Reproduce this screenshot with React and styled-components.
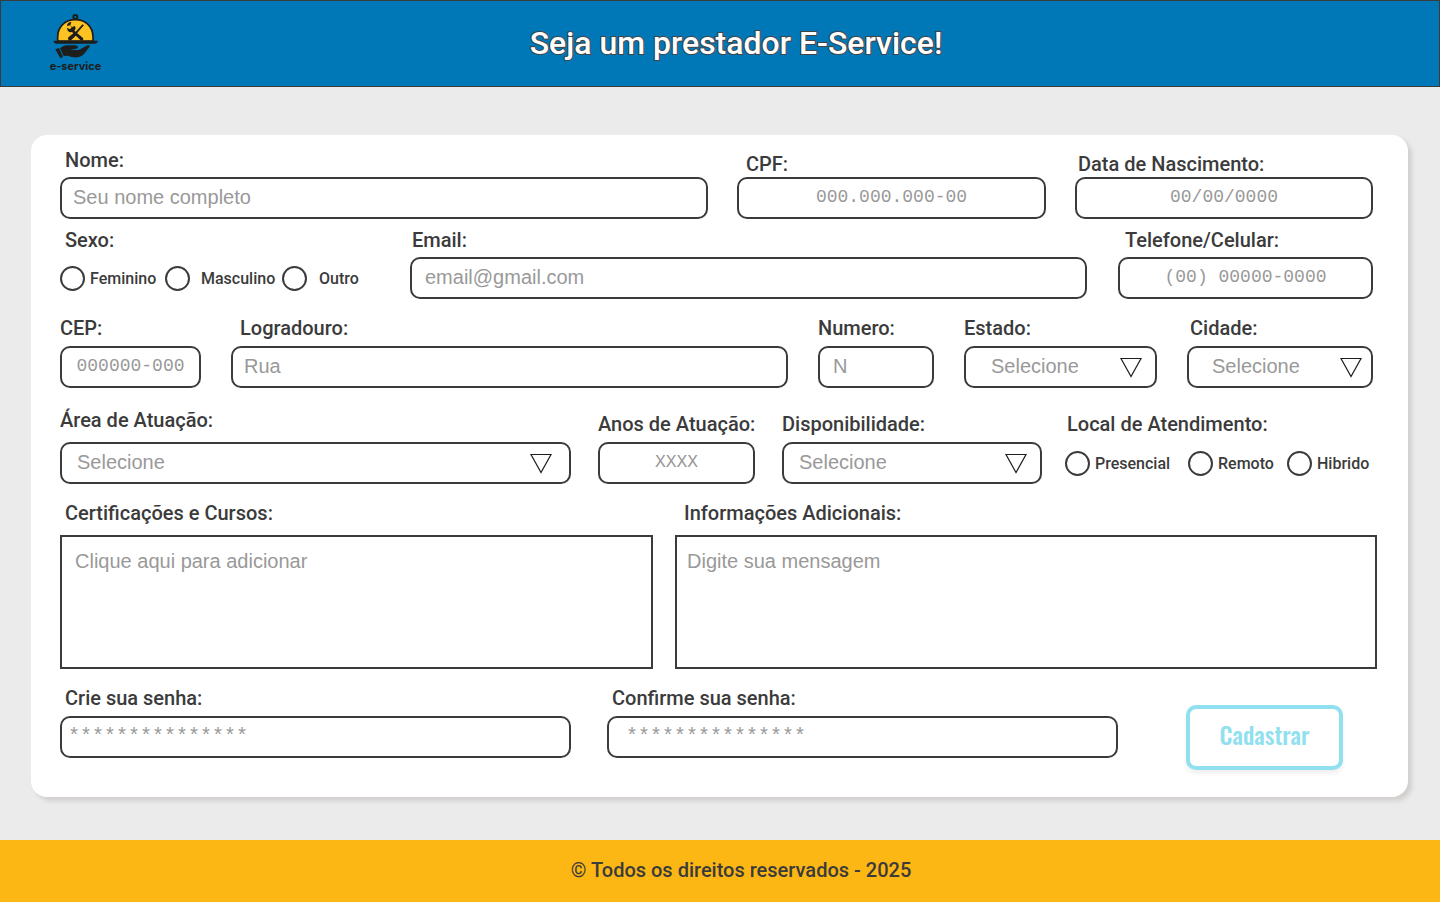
import React from "react";
import styled, { createGlobalStyle } from "styled-components";

const ink = "#3b3b3b";
const hint = "#999999";
const sans = '"Liberation Sans", Arial, sans-serif';
const mono = '"Liberation Mono", "Courier New", monospace';

const GlobalStyle = createGlobalStyle`
  *, *::before, *::after { box-sizing: border-box; }
  body { margin: 0; background: #ebebeb; color: ${ink}; font-family: Roboto, sans-serif; }
`;

const Page = styled.div`
  min-height: 100vh;
  display: flex;
  flex-direction: column;
`;

const Header = styled.header`
  height: 87px;
  display: flex;
  align-items: center;
  padding: 0 70px 0 47px;
  background: #0077b7;
  border: 1px solid ${ink};
`;

const Brand = styled.a`
  display: flex;
  flex-direction: column;
  align-items: center;
  width: 55px;
  color: #1d1d1b;
  font: 700 11px/14px Inter, sans-serif;
  text-decoration: none;
  white-space: nowrap;
`;

const Title = styled.h1`
  flex: 1;
  margin: 0;
  padding-bottom: 2px;
  color: #fff;
  font-size: 32px;
  font-weight: 500;
  line-height: 40px;
  text-align: center;
  -webkit-text-stroke: 2px #444;
  paint-order: stroke fill;
`;

const Main = styled.main`
  flex: 1;
  padding: 48px 32px 43px 31px;
`;

const Card = styled.form`
  padding: 13px 35px 27px 29px;
  background: #fff;
  border-radius: 16px;
  box-shadow: 4px 4px 4px #d3cfcf;
`;

const Row = styled.div`
  display: grid;
  grid-template-columns: ${(p) => p.$cols};
  align-items: ${(p) => p.$align || "end"};
  column-gap: ${(p) => p.$gap}px;
  margin-top: ${(p) => p.$top || 0}px;
  margin-right: ${(p) => (p.$wide ? "-4px" : "0")};
`;

const FieldBox = styled.div`
  display: flex;
  flex-direction: column;
  gap: ${(p) => p.$gap}px;
  min-width: 0;
`;

const Label = styled.label`
  padding-left: ${(p) => p.$indent || 0}px;
  font-size: 20px;
  font-weight: 500;
  line-height: 24px;
  white-space: nowrap;
`;

const Input = styled.input`
  width: 100%;
  height: 42px;
  padding: 0 ${(p) => (p.$center ? 4 : p.$pad || 13)}px 2px;
  border: 2px solid ${ink};
  border-radius: 10px;
  background: #fff;
  color: ${ink};
  font-family: ${(p) => (p.$mono ? mono : sans)};
  font-size: ${(p) => (p.$center ? 18 : 20)}px;
  text-align: ${(p) => (p.$center ? "center" : "left")};
  &::placeholder { color: ${hint}; opacity: 1; }
`;

const SelectWrap = styled.div`
  position: relative;
`;

const SelectBox = styled.select`
  display: block;
  width: 100%;
  height: 42px;
  padding: 0 40px 2px ${(p) => p.$pad}px;
  border: 2px solid ${ink};
  border-radius: 10px;
  background: #fff;
  color: ${hint};
  font: 20px ${sans};
  appearance: none;
`;

const Arrow = styled.svg`
  position: absolute;
  top: 10px;
  right: ${(p) => p.$right}px;
  width: 22px;
  height: 22px;
  pointer-events: none;
`;

const TextArea = styled.textarea`
  display: block;
  width: 100%;
  height: 134px;
  padding: 12px ${(p) => p.$pad}px;
  border: 2px solid ${ink};
  border-radius: 0;
  background: #fff;
  color: ${ink};
  font: 20px/24px ${sans};
  resize: none;
  &::placeholder { color: ${hint}; opacity: 1; }
`;

const Options = styled.div`
  display: grid;
  grid-template-columns: ${(p) => p.$cols};
  align-items: center;
  height: 42px;
`;

const Option = styled.label`
  display: flex;
  align-items: center;
  gap: ${(p) => p.$gap || 5}px;
  font-size: 16px;
  font-weight: 500;
  white-space: nowrap;
`;

const Radio = styled.input`
  flex: none;
  width: 25px;
  height: 25px;
  margin: 0;
  border: 2px solid ${ink};
  border-radius: 50%;
  background: #fff;
  appearance: none;
  &:checked { background: ${ink}; box-shadow: inset 0 0 0 4px #fff; }
`;

const Submit = styled.button`
  height: 65px;
  margin: 19px 30px 0 32px;
  padding: 0 0 8px;
  border: 4px solid #90e0ef;
  border-radius: 10px;
  background: #fff;
  box-shadow: 0 4px 4px #f1f1f1;
  color: #90e0ef;
  font: 500 24px/30px Oswald, "Roboto Condensed", Roboto, sans-serif;
`;

const Footer = styled.footer`
  height: 62px;
  padding-left: 42px;
  background: #fdb714;
  font-size: 20px;
  font-weight: 500;
  line-height: 61px;
  text-align: center;
`;

function Logo() {
  return (
    <svg width="53" height="45" viewBox="27 27 159 135" aria-hidden="true">
      <circle cx="106" cy="36" r="6" fill="none" stroke="#1d1d1b" strokeWidth="6" />
      <path d="M53 108V96C53 64 76 44 106 44s53 20 53 52v12z" fill="#fdc323" stroke="#1d1d1b" strokeWidth="5" />
      <path d="M41 107h132v3q-2 6-9 6H50q-7 0-9-6z" fill="#1d1d1b" />
      <path d="M128 59l2 2-20 23-3-2z" fill="#1d1d1b" stroke="#1d1d1b" strokeWidth="3" />
      <path d="M101 84l8 7-15 14q-5 3-9-1-3-4 1-8z" fill="#1d1d1b" />
      <path d="M94 51l-3 10 5 5 9-3q4 9-2 14l26 22q3 4-1 7-4 2-7-1L96 81q-14 3-15-13l9 5 5-6-5-6-9 2q0-11 13-12z" fill="#1d1d1b" />
      <path d="M46 133l11-4 12 27-8 4z" fill="#1d1d1b" />
      <path d="M60 130q10-9 20-9h24q10 1 10 6-1 5-11 5H91q14 5 27 2l24-13q7-2 8 3l-18 23q-8 9-19 10-17 1-29-5l-13 1z" fill="#1d1d1b" />
    </svg>
  );
}

function Field({ id, label, indent, gap = 5, children }) {
  return (
    <FieldBox $gap={gap}>
      <Label htmlFor={id} $indent={indent}>{label}</Label>
      {children}
    </FieldBox>
  );
}

function Select({ id, pad = 15, arrow = 15 }) {
  return (
    <SelectWrap>
      <SelectBox id={id} $pad={pad} defaultValue="">
        <option value="">Selecione</option>
      </SelectBox>
      <Arrow viewBox="0 0 22 22" $right={arrow} aria-hidden="true">
        <path d="M1 2.500H21L11 20.500Z" fill="none" stroke="#1d1d1b" strokeWidth="1.200" />
      </Arrow>
    </SelectWrap>
  );
}

function RadioGroup({ name, label, indent, gap, cols, options }) {
  return (
    <FieldBox $gap={gap} role="group" aria-labelledby={name}>
      <Label as="span" id={name} $indent={indent}>{label}</Label>
      <Options $cols={cols}>
        {options.map(([text, space]) => (
          <Option key={text} $gap={space}>
            <Radio type="radio" name={name} value={text} />
            {text}
          </Option>
        ))}
      </Options>
    </FieldBox>
  );
}

export default function App() {
  return (
    <Page>
      <GlobalStyle />
      <Header>
        <Brand href="#">
          <Logo />
          e-service
        </Brand>
        <Title>Seja um prestador E-Service!</Title>
      </Header>
      <Main>
        <Card>
          <Row $cols="648fr 309fr 298fr" $gap={29}>
            <Field id="nome" label="Nome:" indent={5}>
              <Input id="nome" placeholder="Seu nome completo" $pad={11} />
            </Field>
            <Field id="cpf" label="CPF:" indent={9} gap={1}>
              <Input id="cpf" placeholder="000.000.000-00" $mono $center />
            </Field>
            <Field id="nascimento" label="Data de Nascimento:" indent={3} gap={1}>
              <Input id="nascimento" placeholder="00/00/0000" $mono $center />
            </Field>
          </Row>

          <Row $cols="319fr 677fr 255fr" $gap={31} $top={9}>
            <RadioGroup
              name="sexo"
              label="Sexo:"
              indent={5}
              gap={5}
              cols="105px 117px auto"
              options={[["Feminino", 5], ["Masculino", 11], ["Outro", 12]]}
            />
            <Field id="email" label="Email:" indent={2}>
              <Input id="email" type="email" placeholder="email@gmail.com" />
            </Field>
            <Field id="telefone" label="Telefone/Celular:" indent={7}>
              <Input id="telefone" type="tel" placeholder="(00) 00000-0000" $mono $center />
            </Field>
          </Row>

          <Row $cols="141fr 557fr 116fr 193fr 186fr" $gap={30} $top={17}>
            <Field id="cep" label="CEP:" gap={6}>
              <Input id="cep" placeholder="000000-000" $mono $center />
            </Field>
            <Field id="rua" label="Logradouro:" indent={9} gap={6}>
              <Input id="rua" placeholder="Rua" $pad={11} />
            </Field>
            <Field id="numero" label="Numero:" gap={6}>
              <Input id="numero" placeholder="N" />
            </Field>
            <Field id="estado" label="Estado:" gap={6}>
              <Select id="estado" pad={25} />
            </Field>
            <Field id="cidade" label="Cidade:" indent={3} gap={6}>
              <Select id="cidade" pad={23} arrow={11} />
            </Field>
          </Row>

          <Row $cols="982fr 308fr" $gap={23} $top={20}>
            <Row $cols="511fr 157fr 260fr" $gap={27}>
              <Field id="area" label="Área de Atuação:" gap={10}>
                <Select id="area" arrow={19} />
              </Field>
              <Field id="anos" label="Anos de Atuação:" gap={6}>
                <Input id="anos" placeholder="XXXX" $mono $center />
              </Field>
              <Field id="disponibilidade" label="Disponibilidade:" gap={6}>
                <Select id="disponibilidade" />
              </Field>
            </Row>
            <RadioGroup
              name="local"
              label="Local de Atendimento:"
              indent={2}
              gap={6}
              cols="123px 99px auto"
              options={[["Presencial", 5], ["Remoto", 5], ["Hibrido", 5]]}
            />
          </Row>

          <Row $cols="593fr 702fr" $gap={22} $top={17} $wide>
            <Field id="cursos" label="Certificações e Cursos:" indent={5} gap={10}>
              <TextArea id="cursos" placeholder="Clique aqui para adicionar" $pad={13} />
            </Field>
            <Field id="informacoes" label="Informações Adicionais:" indent={9} gap={10}>
              <TextArea id="informacoes" placeholder="Digite sua mensagem" $pad={10} />
            </Field>
          </Row>

          <Row $cols="511fr 511fr 219fr" $gap={36} $top={17} $align="start">
            <Field id="senha" label="Crie sua senha:" indent={5} gap={6}>
              <Input id="senha" type="password" placeholder="***************" $mono $pad={6} />
            </Field>
            <Field id="confirma" label="Confirme sua senha:" indent={5} gap={6}>
              <Input id="confirma" type="password" placeholder="***************" $mono $pad={17} />
            </Field>
            <Submit type="button">Cadastrar</Submit>
          </Row>
        </Card>
      </Main>
      <Footer>© Todos os direitos reservados - 2025</Footer>
    </Page>
  );
}
